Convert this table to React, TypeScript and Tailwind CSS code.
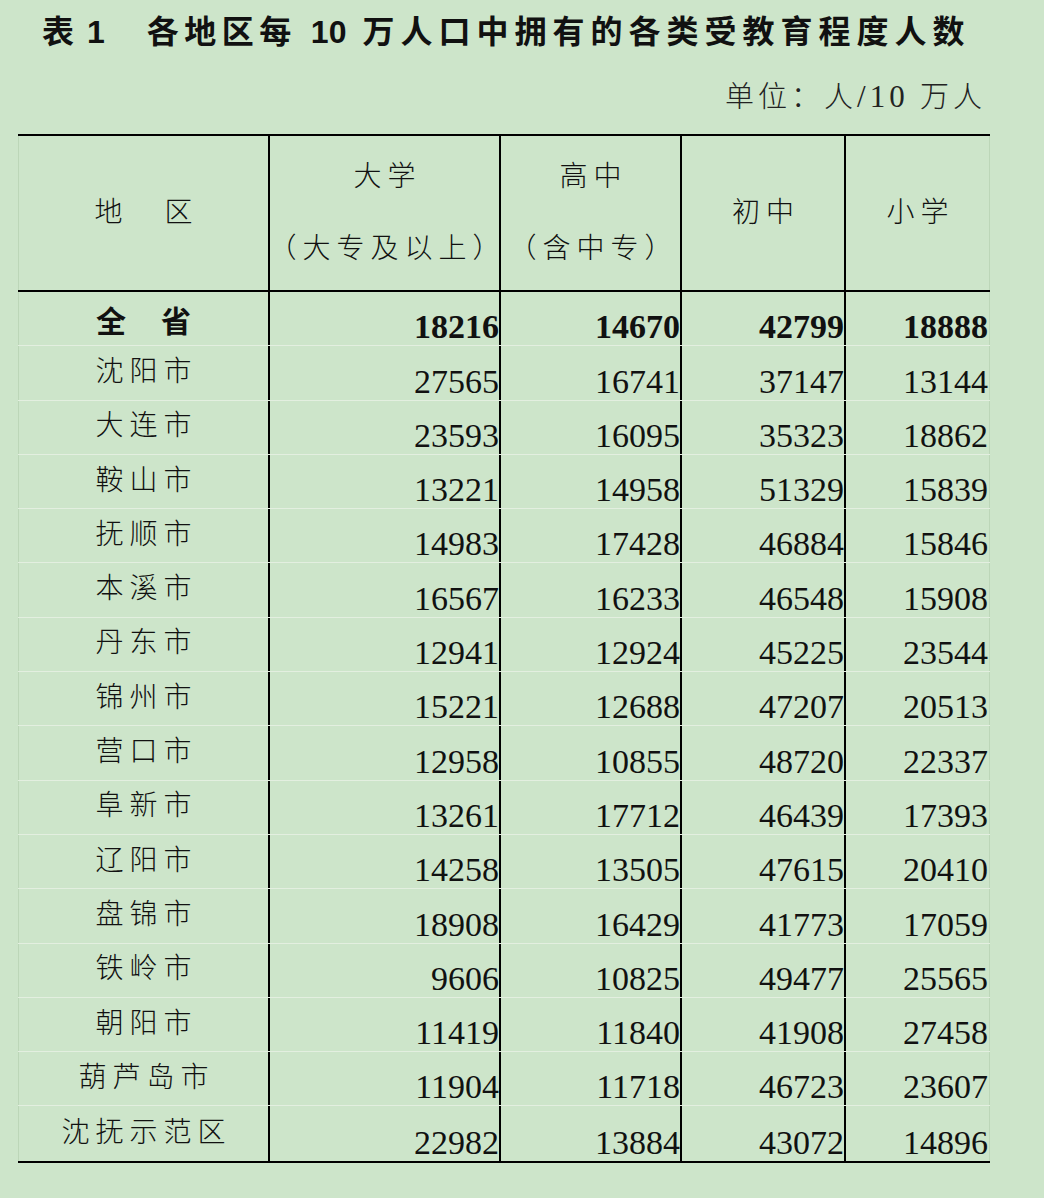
const rows: [string, number, number, number, number][] = [
  ["沈阳市", 27565, 16741, 37147, 13144],
  ["大连市", 23593, 16095, 35323, 18862],
  ["鞍山市", 13221, 14958, 51329, 15839],
  ["抚顺市", 14983, 17428, 46884, 15846],
  ["本溪市", 16567, 16233, 46548, 15908],
  ["丹东市", 12941, 12924, 45225, 23544],
  ["锦州市", 15221, 12688, 47207, 20513],
  ["营口市", 12958, 10855, 48720, 22337],
  ["阜新市", 13261, 17712, 46439, 17393],
  ["辽阳市", 14258, 13505, 47615, 20410],
  ["盘锦市", 18908, 16429, 41773, 17059],
  ["铁岭市", 9606, 10825, 49477, 25565],
  ["朝阳市", 11419, 11840, 41908, 27458],
  ["葫芦岛市", 11904, 11718, 46723, 23607],
  ["沈抚示范区", 22982, 13884, 43072, 14896],
];

const grid = "grid grid-cols-[252px_231px_181px_164px_144px]";
const cjk = "font-['Liberation_Serif','Noto_Sans_CJK_SC',serif] font-light";
const num = "font-['Liberation_Serif',serif] text-[34px] leading-none";

function NumCell({ value, bold, last }: { value: number; bold?: boolean; last?: boolean }) {
  return (
    <div
      className={`flex items-end justify-end pb-[1px] ${last ? "border-r border-r-[#bcd6b8] pr-[1px]" : "border-r-2 border-black pr-0"}`}
    >
      <span className={`${num} ${bold ? "font-bold" : ""}`}>{value}</span>
    </div>
  );
}

export default function App() {
  return (
    <div className="relative h-[1198px] w-[1044px] overflow-hidden bg-[#cde5ca] text-[#111]">
      {/* title */}
      <div className="flex items-center whitespace-nowrap pl-[42px] pt-[13px] font-['Liberation_Sans','Noto_Sans_CJK_SC',sans-serif] text-[32px] font-bold leading-[38px]">
        <span>表</span>
        <span className="ml-[13px]">1</span>
        <span className="ml-[42px] tracking-[5.5px]">各地区每</span>
        <span className="ml-[14px]">10</span>
        <span className="ml-[16px] tracking-[6px]">万人口中拥有的各类受教育程度人数</span>
      </div>

      <div className="mt-[31px] flex justify-end pr-[58px]">
        <span className={`${cjk} text-[29px] leading-[30px] tracking-[4px] text-[#222]`}>
          单位：人<span className="text-[31px]">/10</span> 万人
        </span>
      </div>

      <div className="ml-[18px] mt-[22px] w-[972px] border-y-2 border-y-black">
        {/* header */}
        <div className={`${grid} h-[156px] border-b-2 border-black text-[28px] leading-[36px] ${cjk}`}>
          <div className="flex items-center justify-center gap-[42px] border-r-2 border-black border-l border-l-[#bcd6b8]">
            <span>地</span>
            <span>区</span>
          </div>
          <div className="flex flex-col items-center justify-center gap-[36px] whitespace-nowrap border-r-2 border-black tracking-[6px]">
            <span className="pl-[6px]">大学</span>
            <span className="pl-[6px]">（大专及以上）</span>
          </div>
          <div className="flex flex-col items-center justify-center gap-[36px] whitespace-nowrap border-r-2 border-black tracking-[6px]">
            <span className="pl-[6px]">高中</span>
            <span className="pl-[6px]">（含中专）</span>
          </div>
          <div className="flex items-center justify-center border-r-2 border-black tracking-[6px]">
            <span className="pl-[6px]">初中</span>
          </div>
          <div className="flex items-center justify-center border-r border-r-[#bcd6b8] tracking-[6px]">
            <span className="pl-[6px]">小学</span>
          </div>
        </div>

        {/* 全省 */}
        <div className={`${grid} h-[54.3px] border-b border-[#e3efe0]`}>
          <div className="flex items-center justify-center gap-[35px] border-r-2 border-black border-l border-l-[#bcd6b8] font-['Noto_Sans_CJK_SC',sans-serif] text-[30px] font-bold leading-none">
            <span>全</span>
            <span>省</span>
          </div>
          <NumCell value={18216} bold />
          <NumCell value={14670} bold />
          <NumCell value={42799} bold />
          <NumCell value={18888} bold last />
        </div>

        {rows.map(([name, a, b, c, d], i) => (
          <div
            key={name}
            className={`${grid} h-[54.3px] ${i < rows.length - 1 ? "border-b border-[#e3efe0]" : ""}`}
          >
            <div className={`flex items-center justify-center border-r-2 border-black border-l border-l-[#bcd6b8] pb-[2px] text-[28px] leading-none tracking-[6px] ${cjk}`}>
              <span className="pl-[6px]">{name}</span>
            </div>
            <NumCell value={a} />
            <NumCell value={b} />
            <NumCell value={c} />
            <NumCell value={d} last />
          </div>
        ))}
      </div>
    </div>
  );
}
